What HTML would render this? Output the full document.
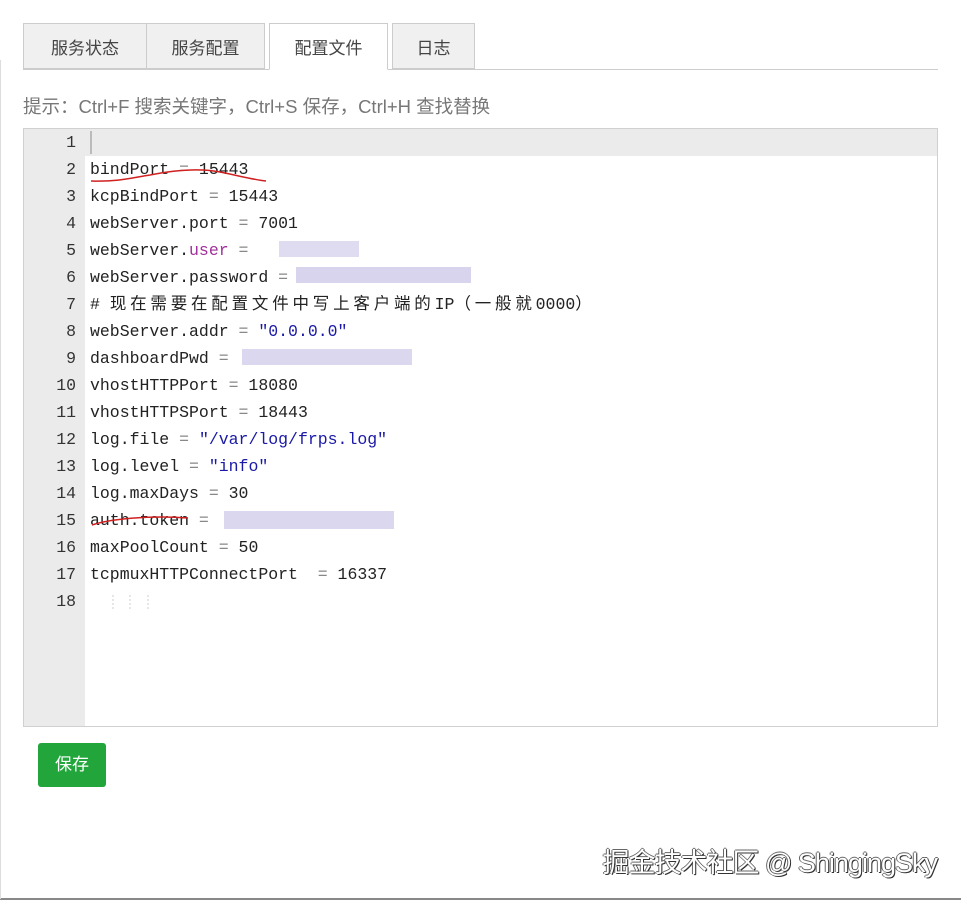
<!DOCTYPE html>
<html><head><meta charset="utf-8"><style>
body{margin:0;width:961px;height:901px;background:#fff;position:relative;overflow:hidden;font-family:"Liberation Sans","Noto Sans CJK SC",sans-serif}
.tab{position:absolute;top:23px;height:46px;border:1px solid #ccc;background:#f0f0f0;box-sizing:border-box;font-size:17px;color:#444;text-align:center;line-height:50px}
.tab.act{background:#fff;border-bottom-color:#fff;height:47px}
.line{position:absolute;left:23px;top:69px;width:915px;border-top:1px solid #ccc}
.hint{position:absolute;left:23px;top:93px;font-size:18.5px;color:#777}
.ed{position:absolute;left:23px;top:128px;width:915px;height:599px;border:1px solid #d0d0d0;box-sizing:border-box;background:#fff}
.gut{position:absolute;left:0;top:0;width:61px;height:597px;background:#ebebeb}
.hl{position:absolute;left:0;top:0;width:913px;height:27px;background:#ebebeb}
.code{position:absolute;left:0;top:0;font-family:"Liberation Mono","DejaVu Sans Mono","Noto Sans CJK SC",monospace;font-size:16.5px;color:#222}
.r{height:27px;line-height:27px;white-space:pre;position:relative}
.n{display:inline-block;width:52px;text-align:right;color:#333}
.t{position:absolute;left:66px;top:0}
.s{color:#1a1aa6}.k{color:#a0309a}.o{color:#888}
.cj{letter-spacing:3.8px}
.bl{position:absolute;background:#b8b0e0;opacity:.7}
.btn{position:absolute;left:38px;top:743px;width:68px;height:44px;background:#22a63c;border-radius:3px;color:#fff;font-size:17px;text-align:center;line-height:44px}
.wm{position:absolute;right:24px;top:841px;font-size:27px;color:#fff;text-shadow:1px 1px 0 #333,-1px 0 0 #666,0 -1px 0 #666,1px 0 0 #555;letter-spacing:-1px}
</style></head><body>
<div class="tab" style="left:23px;width:124px">服务状态</div>
<div class="tab" style="left:146px;width:119px">服务配置</div>
<div class="line"></div>
<div class="tab act" style="left:269px;width:119px">配置文件</div>
<div class="tab" style="left:392px;width:83px">日志</div>
<div class="hint">提示：Ctrl+F 搜索关键字，Ctrl+S 保存，Ctrl+H 查找替换</div>
<div class="ed">
<div class="gut"></div><div class="hl"></div>
<div style="position:absolute;left:66px;top:2px;width:2px;height:23px;background:#bbb"></div>
<div class="code">
<div class="r"><span class="n">1</span></div>
<div class="r"><span class="n">2</span><span class="t">bindPort <span class="o">=</span> 15443</span></div>
<div class="r"><span class="n">3</span><span class="t">kcpBindPort <span class="o">=</span> 15443</span></div>
<div class="r"><span class="n">4</span><span class="t">webServer.port <span class="o">=</span> 7001</span></div>
<div class="r"><span class="n">5</span><span class="t">webServer.<span class="k">user</span> <span class="o">=</span></span></div>
<div class="r"><span class="n">6</span><span class="t">webServer.password <span class="o">=</span></span></div>
<div class="r"><span class="n">7</span><span class="t"># <span class="cj">现在需要在配置文件中写上客户端的</span>IP<span class="cj">（一般就</span>0000）</span></div>
<div class="r"><span class="n">8</span><span class="t">webServer.addr <span class="o">=</span> <span class="s">"0.0.0.0"</span></span></div>
<div class="r"><span class="n">9</span><span class="t">dashboardPwd <span class="o">=</span></span></div>
<div class="r"><span class="n">10</span><span class="t">vhostHTTPPort <span class="o">=</span> 18080</span></div>
<div class="r"><span class="n">11</span><span class="t">vhostHTTPSPort <span class="o">=</span> 18443</span></div>
<div class="r"><span class="n">12</span><span class="t">log.file <span class="o">=</span> <span class="s">"/var/log/frps.log"</span></span></div>
<div class="r"><span class="n">13</span><span class="t">log.level <span class="o">=</span> <span class="s">"info"</span></span></div>
<div class="r"><span class="n">14</span><span class="t">log.maxDays <span class="o">=</span> 30</span></div>
<div class="r"><span class="n">15</span><span class="t">auth.token <span class="o">=</span></span></div>
<div class="r"><span class="n">16</span><span class="t">maxPoolCount <span class="o">=</span> 50</span></div>
<div class="r"><span class="n">17</span><span class="t">tcpmuxHTTPConnectPort  <span class="o">=</span> 16337</span></div>
<div class="r"><span class="n">18</span></div>
</div>
<div class="bl" style="left:255px;top:112px;width:80px;height:16px;opacity:.45"></div>
<div class="bl" style="left:272px;top:138px;width:175px;height:16px;opacity:.55"></div>
<div class="bl" style="left:218px;top:220px;width:170px;height:16px;opacity:.5"></div>
<div class="bl" style="left:200px;top:382px;width:170px;height:18px;opacity:.5"></div>
</div>
<svg style="position:absolute;left:0;top:0" width="961" height="901">
<path d="M91 181 C120 182 135 177 150 175 C175 170 200 168 220 172 C240 176 255 180 266 181" stroke="#d02020" stroke-width="1.5" fill="none"/>
<path d="M92 525 C110 519 150 515 188 518" stroke="#d02020" stroke-width="1.5" fill="none"/>
<path d="M113 595v15M130 595v15M148 595v15" stroke="#ccc" stroke-dasharray="2 2"/>
<line x1="0" y1="899" x2="961" y2="899" stroke="#888" stroke-width="2"/>
<line x1="0.5" y1="60" x2="0.5" y2="899" stroke="#ddd"/>
</svg>
<div class="btn">保存</div>
<div class="wm">掘金技术社区 @ ShingingSky</div>
</body></html>
